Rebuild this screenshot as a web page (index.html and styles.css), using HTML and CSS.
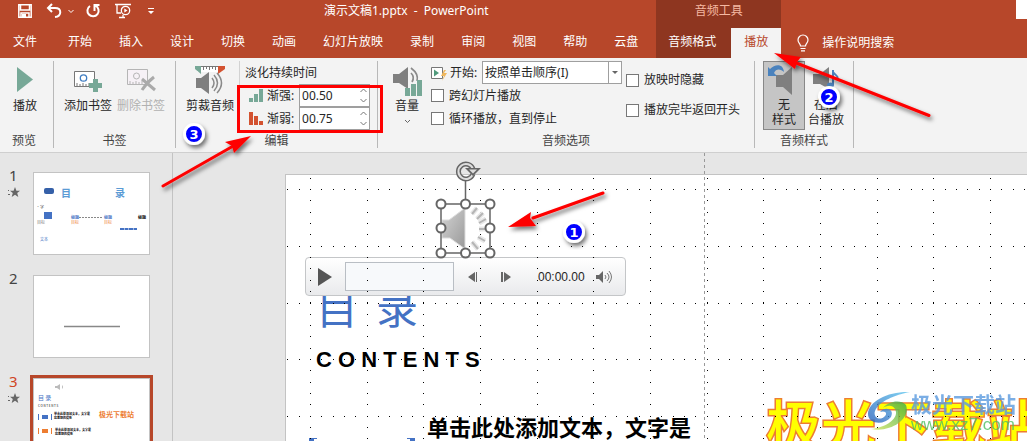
FILE: index.html
```html
<!DOCTYPE html>
<html lang="zh-CN">
<head>
<meta charset="utf-8">
<title>演示文稿1.pptx - PowerPoint</title>
<link rel="stylesheet" href="styles.css">
</head>
<body>
<header class="header">
  <div class="titlebar">
    <div class="quick">
      <button class="q" aria-label="保存"><svg width="16" height="16" fill="none" stroke="#fff" stroke-width="1.500"><path d="M1.800 1.800h12.400v12.400H1.800zM3.500 2v5h9V2"/><path d="M4 14v-4h8v4" /><path d="M5 11h4v3H5z" fill="#fff" stroke="none"/></svg></button>
      <button class="q undo" aria-label="撤消"><svg width="16" height="16" fill="none" stroke="#fff" stroke-width="2"><path d="M6 1 2 5l4 4M2 5h7c7 0 7 8 0 9"/></svg></button>
      <button class="q caret" aria-label="撤消列表"><svg width="6" height="5" fill="none" stroke="#fff"><path d="m.5 1 2.500 2.500L5.500 1"/></svg></button>
      <button class="q redo" aria-label="重复"><svg width="16" height="16" fill="none" stroke="#fff" stroke-width="2"><path d="M5 3a5.600 5.600 0 1 0 5.500-.3M9.500 8V2h5"/></svg></button>
      <button class="q show" aria-label="放映"><svg width="18" height="16" fill="none" stroke="#fff" stroke-width="1.300"><path d="M1 1.500h16M3 2v8h4M5 14.500h6M9 12v3"/><circle cx="11.500" cy="7.500" r="4.200"/><path d="m10.300 5.500 3.200 2-3.200 2z" fill="#fff" stroke="none"/></svg></button>
      <button class="q more" aria-label="自定义"><svg width="6" height="8" fill="#fff"><path d="M0 1h6v1H0zM0 4h6L3 7z"/></svg></button>
    </div>
    <h1 class="doc">演示文稿1.pptx&nbsp; -&nbsp; PowerPoint</h1>
  </div>
  <div class="context-title">音频工具</div>
  <div class="account"><button class="signin" aria-label="登录"></button></div>
  <nav class="tabs">
    <button class="tab file">文件</button><button class="tab">开始</button><button class="tab">插入</button><button class="tab">设计</button><button class="tab">切换</button><button class="tab">动画</button><button class="tab">幻灯片放映</button><button class="tab">录制</button><button class="tab">审阅</button><button class="tab">视图</button><button class="tab">帮助</button><button class="tab">云盘</button>
  </nav>
  <nav class="context-tabs"><button class="tab format">音频格式</button><button class="tab active">播放</button></nav>
  <button class="tell"><svg width="12" height="18" fill="none" stroke="#fff" stroke-width="1.200"><path d="M3.500 12c0-2.500-2.500-3-2.500-6a5 5 0 0 1 10 0c0 3-2.500 3.500-2.500 6zM3.500 14.500h5M4 16.800h4"/></svg>操作说明搜索</button>
</header>

<section class="ribbon">
  <div class="group preview">
    <div class="body"><button class="big"><svg width="32" height="32"><path d="M8 2v25l16-12.500z" fill="#77a897"/></svg>播放</button></div>
    <div class="caption">预览</div>
  </div>
  <div class="group marks">
    <div class="body">
      <button class="big"><svg width="32" height="32"><path d="M2.500 6.500h20v15h-20z" fill="#fff" stroke="#777"/><path d="M5 21v-3m3 3v-2m3 2v-3m3 3v-2m3 2v-3" stroke="#777"/><circle cx="11.500" cy="13" r="3.200" fill="none" stroke="#3f7cc0" stroke-width="1.300"/><path d="M21 14h5v4h4v5h-4v4h-5v-4h-4v-5h4z" fill="#77a897"/></svg>添加书签</button>
      <button class="big" disabled><svg width="32" height="32"><path d="M2.500 4.500h20v15h-20z" fill="#f6f1f6" stroke="#b5b5b5"/><path d="M5 19v-3m3 3v-2m3 2v-3m3 3v-2m3 2v-3" stroke="#b5b5b5"/><circle cx="11.500" cy="11" r="3" fill="none" stroke="#b5b5b5"/><path d="m17 14 13 11M29 12c-4 3-8 7-12 13" stroke="#aaa" stroke-width="3"/></svg>删除书签</button>
    </div>
    <div class="caption">书签</div>
  </div>
  <div class="group edit">
    <div class="body">
      <button class="big"><svg width="32" height="32"><path d="M3 1h25v6H3z" fill="#fff"/><path d="M2 1.500h28M9.500 1v4m3-4v3m3-3v4m3-4v3m3-3v4" stroke="#777"/><path d="M1 1h6v8L1 4z" fill="#77a897"/><path d="M31 1h-7v8l7-5z" fill="#d35230"/><path d="M2 13h5l8-6v22l-8-6H2z" fill="#7f7f7f"/><path d="M18 13q4 5 0 10M20 10q7 8 0 16M23 8q9 10 0 20" fill="none" stroke="#8a8a8a" stroke-width="1.500"/></svg>剪裁音频</button>
      <div class="fade">
        <div class="row">淡化持续时间</div>
        <div class="row"><svg width="15" height="13" fill="#77a897"><path d="M0 9h4v4H0zM5 5h4v8H5zM10 0h4v13h-4z"/></svg><label for="in">渐强:</label><span class="spin"><input id="in" value="00.50"><span class="steps"><button aria-label="增加渐强"><svg width="7" height="5" fill="none" stroke="#777"><path d="m.5 4 3-3 3 3"/></svg></button><button aria-label="减少渐强"><svg width="7" height="5" fill="none" stroke="#777"><path d="m.5 1 3 3 3-3"/></svg></button></span></span></div>
        <div class="row"><svg width="15" height="13" fill="#d35230"><path d="M0 0h4v13H0zM5 4h4v9H5zM10 9h4v4h-4z"/></svg><label for="out">渐弱:</label><span class="spin"><input id="out" value="00.75"><span class="steps"><button aria-label="增加渐弱"><svg width="7" height="5" fill="none" stroke="#777"><path d="m.5 4 3-3 3 3"/></svg></button><button aria-label="减少渐弱"><svg width="7" height="5" fill="none" stroke="#777"><path d="m.5 1 3 3 3-3"/></svg></button></span></span></div>
      </div>
    </div>
    <div class="caption">编辑</div>
  </div>
  <div class="group options">
    <div class="body">
      <button class="big"><svg width="32" height="32"><path d="M2 9h6l9-7v22l-9-6H2z" fill="#7f7f7f"/><path d="M20 8q4 4 1 9M20 3q8 6 6 13" fill="none" stroke="#8a8a8a" stroke-width="1.700"/><path d="M14 23h5v8h-5zM20 19h5v12h-5zM26 15h5v16h-5z" fill="#77a897"/></svg>音量<svg class="drop" width="7" height="5" fill="none" stroke="#666"><path d="m1 1 2.500 2.500L6 1"/></svg></button>
      <div class="play-col">
        <div class="row"><svg width="16" height="16"><path d="M.5 2.500v11h11v-11z" fill="#fff" stroke="#777"/><path d="M3 4.500v7L8 8z" fill="#509a7c"/><path d="m13 5-3 6h3l-2 5 5-8h-3l2-3z" fill="#efb75d"/></svg><label for="start">开始:</label><select id="start"><option>按照单击顺序(I)</option></select></div>
        <label class="row check"><input type="checkbox">跨幻灯片播放</label>
        <label class="row check"><input type="checkbox">循环播放，直到停止</label>
      </div>
      <div class="hide-col">
        <label class="check"><input type="checkbox">放映时隐藏</label>
        <label class="check"><input type="checkbox">播放完毕返回开头</label>
      </div>
    </div>
    <div class="caption">音频选项</div>
  </div>
  <div class="group styles">
    <div class="body">
      <button class="big two on"><svg width="32" height="32"><path d="M8 11h7l9-8v28l-9-8H8z" fill="#7f7f7f"/><path d="M-1 2v10h10L6 9c2-5 7-4 10-1C15-1 7 0 2 5z" fill="#4a82bd"/></svg><span>无<br>样式</span></button>
      <button class="big two"><svg width="32" height="32"><path d="M3 10h7l9-7v22l-9-5H3z" fill="#7f7f7f"/><path d="M23 6v15M23 8c3 4 6 4 4 8" fill="none" stroke="#4a82bd" stroke-width="2"/><ellipse cx="20.500" cy="21" rx="3.500" ry="2.500" fill="#4a82bd"/></svg><span>在后<br>台播放</span></button>
    </div>
    <div class="caption">音频样式</div>
  </div>
</section>

<main class="work">
  <aside class="slides">
    <div class="item"><div class="num">1<svg width="12" height="11" fill="#666"><path d="m7 0 1.400 3.700H12L9.200 6l1.100 4L7 7.800 3.700 10l1.100-4L2 3.700h3.600zM0 3h1v1H0zM0 7h2v1H0z"/></svg></div>
      <button class="thumb" aria-label="幻灯片 1"><svg viewBox="0 0 115 81"><rect x="10" y="15" width="10" height="6" rx="2" fill="#3560a8"/><g class="mini-head"><text x="27" y="24">目</text><text x="81" y="24">录</text></g><g class="mini"><text x="2" y="36" fill="#555">·字</text><rect x="10" y="39" width="8" height="7" fill="#4472c4"/><text x="3" y="51" fill="#777">目标</text><text x="37" y="46" class="b blue">标题</text><text x="70" y="46" class="b blue">标题</text><text x="104" y="46" class="b">标题</text><text x="37" y="51" fill="#ed7d31">目标</text><text x="70" y="51" fill="#ed7d31">目标</text><text x="6" y="68" fill="#4472c4">文本</text></g><path d="M45 44.500h24" stroke="#888" stroke-dasharray="2 1"/><path d="M86 56h17" stroke="#4472c4" stroke-width="2" stroke-dasharray="4 .5"/></svg></button></div>
    <div class="item"><div class="num">2</div><button class="thumb" aria-label="幻灯片 2"><svg viewBox="0 0 115 81"><path d="M30 50.500h56" stroke="#888" stroke-width="1.500"/></svg></button></div>
    <div class="item current"><div class="num">3<svg width="12" height="11" fill="#666"><path d="m7 0 1.400 3.700H12L9.200 6l1.100 4L7 7.800 3.700 10l1.100-4L2 3.700h3.600zM0 3h1v1H0zM0 7h2v1H0z"/></svg></div>
      <button class="thumb" aria-label="幻灯片 3"><svg viewBox="0 0 115 81"><path d="M21 7h2l3-2v6l-3-2h-2zM28 6q2 2 0 4" fill="#bbb"/><g class="mini"><text x="4" y="21" class="t">目&nbsp;录</text><text x="4" y="28" class="s">C O N T E N T S</text><text x="20" y="36" class="b s">单击此处添加文本，文字是</text><text x="20" y="40" class="b s">您思想的提炼</text><text x="21" y="52" class="b s">单击此处添加文本，文字是</text><text x="21" y="56" class="b s">您思想的提炼</text><text x="65" y="38" class="art">极光下载站</text></g><path d="M4.500 35v6M17.500 35v6" stroke="#4472c4" /><path d="M4.500 49v6M17.500 49v6" stroke="#ed7d31"/><path d="M8 38h6" stroke="#4472c4" stroke-width="4"/><path d="M8 52h6" stroke="#ed7d31" stroke-width="4"/></svg></button></div>
  </aside>
  <div class="stage">
    <div class="slide">
      <h2 class="toc"><span>目</span><span>录</span></h2>
      <p class="contents">C O N T E N T S</p>
      <p class="desc">单击此处添加文本，文字是</p>
      <svg class="bracket" width="106" height="6" fill="#4472c4"><path d="M0 0h8v1H5v5H0zM98 0h8v6h-5V1h-3z"/></svg>
      <p class="wordart">极光下载站</p>
      <div class="player">
        <button aria-label="播放"><svg width="14" height="18"><path d="M0 0v18l14-9z" fill="#555"/></svg></button>
        <div class="track"></div>
        <button class="back" aria-label="后退"><svg width="10" height="10" fill="#666"><path d="M7 0v10L0 5zM8 0h1v10H8z"/></svg></button>
        <button class="fwd" aria-label="前进"><svg width="10" height="10" fill="#666"><path d="M3 0v10l7-5zM0 0h2v10H0z"/></svg></button>
        <span class="time">00:00.00</span>
        <button aria-label="音量"><svg width="16" height="14"><path d="M0 5h3l4-4v12L3 9H0z" fill="#666"/><path d="M9 5q2 2 0 4M11 3q4 4 0 8M13 1q5 6 0 12" fill="none" stroke="#777"/></svg></button>
      </div>
      <svg class="dots" width="100%" height="100%" aria-hidden="true">
        <defs>
          <path id="h" d="M0 .5h1m10 0h1m11 0h1m10 0h1m10 0h1m11 0h1m10 0h1m10 0h1m11 0h1m10 0h1m10 0h1m11 0h1m10 0h1m10 0h1m11 0h1" stroke="#000"/>
          <path id="v" d="M.5 0v1m0 10v1m0 11v1m0 10v1m0 10v1m0 11v1m0 10v1m0 10v1m0 11v1m0 10v1m0 10v1m0 11v1m0 10v1m0 10v1m0 11v1" stroke="#000"/>
          <pattern id="grid" x="24" y="14" width="170" height="170" patternUnits="userSpaceOnUse"><use href="#h"/><use href="#h" y="57"/><use href="#h" y="114"/><use href="#v"/><use href="#v" x="57"/><use href="#v" x="113"/></pattern>
        </defs>
        <rect width="100%" height="100%" fill="url(#grid)"/>
      </svg>
      <svg class="audio" width="60" height="104" aria-label="音频对象">
        <defs><linearGradient id="metal" x1="0" y1="0" x2="1" y2="1"><stop offset="0" stop-color="#d4d4d4"/><stop offset="1" stop-color="#999"/></linearGradient></defs>
        <path d="M7 60h7l16-12v41L15 78H7z" fill="url(#metal)" stroke="#ddd"/>
        <path d="m37 54 5-6m0 11 6-6m-4 10 7-4m-7 10h8m-9 8 7 4m-13 1 6 7" stroke="#e8e8e8" stroke-width="5"/>
        <path d="m37 54 5-6m0 11 6-6m-4 10 7-4m-7 10h8m-9 8 7 4m-13 1 6 7" stroke="#b5b5b5" stroke-width="2"/>
        <g fill="none" stroke="#666" stroke-width="1.500"><path d="M6 44h49v49H6zM30.500 44V20"/><g fill="#fff" stroke-width="2"><circle cx="6" cy="44" r="4.500"/><circle cx="30.500" cy="44" r="4.500"/><circle cx="55" cy="44" r="4.500"/><circle cx="6" cy="68" r="4.500"/><circle cx="55" cy="68" r="4.500"/><circle cx="6" cy="93" r="4.500"/><circle cx="30.500" cy="93" r="4.500"/><circle cx="55" cy="93" r="4.500"/></g></g>
        <path d="M38 14a7.500 7.500 0 1 1 0-5" fill="none" stroke="#666" stroke-width="5"/><path d="M38 14a7.500 7.500 0 1 1 0-5" fill="none" stroke="#ddd" stroke-width="2"/><path d="M30 8h16l-8 8z" fill="#666"/><path d="M34 9.500h8l-4 4z" fill="#ddd"/>
      </svg>
    </div>
    <div class="guide"></div>
    <div class="watermark">
      <svg width="44" height="40"><defs><linearGradient id="sw" x1="0" y1="1" x2="1" y2="0"><stop offset="0" stop-color="#2a62bd"/><stop offset="1" stop-color="#62c8f0"/></linearGradient><linearGradient id="gr" x1="0" y1="1" x2="1" y2="0"><stop offset="0" stop-color="#d5e65a"/><stop offset="1" stop-color="#36a84d"/></linearGradient></defs><path d="M43 1C22 0 1 10 1 23c0 10 16 12 23 3 4-8-6-11-11-5 6-2 8 2 4 5-5 4-11 0-9-6C12 10 28 4 43 1z" fill="url(#sw)"/><path d="M39 14c5 13-14 28-35 24 15-1 29-11 24-20-3-5-9-3-12-1 5-7 18-9 23-3z" fill="url(#gr)"/></svg>
      <div><div class="wm-name">极光下载站</div><div class="wm-url">www.xz7.com</div></div>
    </div>
  </div>
</main>

<svg class="notes" width="960" height="250">
  <defs><filter id="sh" x="-30%" y="-30%" width="160%" height="160%"><feDropShadow dx="2" dy="3" stdDeviation="2" flood-opacity=".55"/></filter></defs>
  <path d="M238.500 86.500h143v45h-143z" fill="none" stroke="#fe0000" stroke-width="3"/>
  <g filter="url(#sh)" fill="#fe0000" stroke="#fe0000" stroke-linecap="round" stroke-width="3">
    <path d="m603 193-70 25M929 115.500 790 60.500M163 186l72-41"/>
    <path stroke="none" d="m508 227 23-15-1 6 6 8zM774 53l27 4-4 5-2 7zM251 136l-17 17-2-7-7-4z"/>
  </g>
  <g filter="url(#sh)" fill="#00f" stroke="#fff" stroke-width="3"><circle cx="574" cy="232" r="9.500"/><circle cx="829" cy="97" r="9.500"/><circle cx="194" cy="134" r="9.500"/></g>
  <g class="note-num"><text x="574" y="237">1</text><text x="829" y="102">2</text><text x="194" y="139">3</text></g>
</svg>
</body>
</html>
```
FILE: styles.css
```css
* { box-sizing: border-box; }
body { margin: 0; height: 100vh; overflow: hidden; position: relative; display: flex; flex-direction: column; font: 12px/16px "Noto Sans", "Noto Sans CJK SC", sans-serif; color: #262626; background: #e6e6e6; }
button { border: 0; padding: 0; margin: 0; background: none; font: inherit; color: inherit; }
svg { display: block; flex: none; }
h1, h2, p { margin: 0; }

.header { display: grid; grid-template-columns: auto auto 1fr; grid-template-rows: 28px 30px; flex: none; background: #b7472a; color: #fff; }
.titlebar { display: flex; align-items: center; padding-left: 17px; padding-bottom: 6px; }
.quick { display: flex; align-items: center; }
.undo { margin-left: 13px; }
.caret { margin-left: 6px; }
.redo { margin-left: 11px; }
.show { margin-left: 13px; }
.more { margin-left: 16px; }
.doc { margin-left: 170px; font-size: 12px; font-weight: 400; white-space: nowrap; }
.context-title { padding-top: 3px; text-align: center; background: #8e3620; color: #f5b8a2; }
.account { display: flex; justify-content: flex-end; }
.signin { width: 11px; height: 19px; background: #fff; }
.tabs, .context-tabs { display: flex; }
.tabs { gap: 1px; padding-right: 5px; }
.tab { padding: 0 13px; padding-bottom: 2px; white-space: nowrap; }
.file { padding-right: 17px; }
.context-tabs { background: #8e3620; }
.format { padding: 0 15px 2px 12px; }
.active { background: #f3f3f3; color: #b7472a; }
.tell { display: flex; align-items: center; gap: 13px; padding-left: 16px; }

.ribbon { display: flex; flex: none; padding: 3px 0 4px; background: #f3f3f3; border-bottom: 1px solid #cfcfcf; }
.group { display: flex; flex-direction: column; border-right: 1px solid #b8b8b8; white-space: nowrap; }
.body { display: flex; height: 71px; }
.caption { padding-top: 1px; line-height: 15px; text-align: center; color: #444; }
.big { display: flex; flex-direction: column; align-items: center; height: 69px; padding-top: 4px; line-height: 18px; white-space: nowrap; }
.big:disabled { color: #b1b1b1; }
.drop { margin-top: 4px; }
.preview .body { padding: 0 12px 0 9px; }
.preview .caption { padding-right: 5px; }
.marks .body { padding: 0 10px; gap: 5px; }
.edit .body { padding: 0 7px 0 10px; gap: 5px; }
.fade { padding-left: 5px; border-left: 1px solid #d2d2d2; height: 69px; }
.row { display: flex; align-items: center; height: 23px; }
.fade .row svg { margin-left: 4px; }
.fade label { width: 35px; padding-left: 3px; }
.spin { display: flex; width: 71px; height: 23px; background: #fff; border: 1px solid #9f9f9f; }
.spin input { flex: 1; min-width: 0; padding: 0 0 0 2px; border: 0; background: none; font: inherit; color: #262626; }
.steps { display: flex; flex-direction: column; justify-content: space-around; width: 13px; }
.options .body { padding: 0 14px 0 13px; }
.options .big { padding-right: 8px; }
.play-col { width: 191px; }
.play-col .row label[for] { width: 35px; padding-left: 3px; }
.play-col select { appearance: none; flex: 1; height: 23px; padding: 0 3px 0 2px; border: 1px solid #9f9f9f; border-radius: 0; font: inherit; color: #262626; background: linear-gradient(#9f9f9f, #9f9f9f) right 12px top / 1px 100% no-repeat, #fff; }
.play-col .row { position: relative; }
.play-col .row:first-child::after { content: ""; position: absolute; right: 4px; top: 10px; border: 3px solid transparent; border-top-color: #666; border-bottom: 0; }
.check { display: flex; align-items: center; gap: 5px; }
.check input { appearance: none; width: 13px; height: 13px; margin: 0; background: #fff; border: 1px solid #777; }
.hide-col { padding: 4px 0 0 4px; }
.hide-col .check { height: 30px; }
.styles .body { padding: 0 6px 0 8px; }
.two { width: 42px; line-height: 15px; gap: 1px; padding-top: 3px; }
.on { background: #c5c5c5; border: 1px solid #888; padding-top: 2px; }

.work { display: flex; flex: 1; min-height: 0; overflow: hidden; }
.slides { flex: none; width: 173px; padding: 19px 0 0 8px; border-right: 1px solid #c3c3c3; overflow: hidden; }
.item { display: flex; margin-bottom: 20px; }
.num { width: 25px; flex: none; font-size: 15px; line-height: 17px; padding-left: 1px; color: #444; margin-top: -5px; }
.num svg { margin-top: 3px; margin-left: -1px; }
.thumb { width: 117px; height: 83px; flex: none; background: #fff; border: 1px solid #c3c3c3; }
.thumb svg { width: 100%; height: 100%; }
.current .num { color: #d04525; }
.current .thumb { outline: 3px solid #b7472a; }
.mini-head { font: 700 10px "Noto Sans CJK SC", sans-serif; fill: #5b9bd5; }
.mini { font: 4px "Noto Sans CJK SC", sans-serif; }
.mini .b { font-weight: 700; }
.mini .s { font-size: 3px; }
.mini .blue { fill: #4472c4; }
.mini .t { font-size: 6px; fill: #4472c4; }
.mini .art { font-size: 7px; font-weight: 700; fill: #ed7d31; }

.stage { position: relative; flex: 1; display: flex; padding: 21px 0 0 112px; overflow: hidden; }
.slide { position: relative; flex: 1; background: #fff; border: 1px solid #c3c3c3; border-width: 1px 0 0 1px; }
.guide { position: absolute; left: 531px; top: 0; bottom: 0; width: 1px; background: repeating-linear-gradient(#999 0 3px, transparent 3px 6px); }
.toc, .contents, .desc, .bracket, .wordart, .player, .dots, .audio { position: absolute; }
.toc { left: 30px; top: 101px; display: flex; gap: 18px; font: 400 42px/60px "Noto Sans CJK SC", sans-serif; color: #4472c4; }
.contents { left: 30px; top: 172px; font: 700 22px/26px "Liberation Sans", sans-serif; color: #000; white-space: nowrap; }
.desc { left: 141px; top: 236px; font: 700 22px/30px "Noto Sans CJK SC", sans-serif; color: #000; white-space: nowrap; }
.bracket { left: 23px; top: 263px; }
.wordart { left: 480px; top: 207px; font: 500 55px/80px "Noto Sans CJK SC", sans-serif; color: #ff0; -webkit-text-stroke: 3px #ed7d31; paint-order: stroke fill; white-space: nowrap; }
.dots { left: 0; top: 0; }
.player { left: 19px; top: 82px; width: 321px; height: 39px; display: flex; align-items: center; padding: 0 13px 0 12px; border: 1px solid #c4c6c8; border-radius: 4px; background: linear-gradient(#fff, #e9eaec); }
.track { width: 109px; height: 29px; margin-left: 13px; background: #f7f9fb; border: 1px solid #b9bec4; }
.back { margin-left: 14px; }
.fwd { margin-left: 23px; }
.time { flex: 1; padding-left: 27px; font: 12px/16px "Liberation Sans", sans-serif; }
.audio { left: 149px; top: -15px; overflow: visible; }
.watermark { position: absolute; left: 694px; top: 238px; display: flex; opacity: .8; }
.wm-name { font: 700 21px/24px "Noto Sans CJK SC", sans-serif; color: #5b9bdf; }
.wm-url { font: 17px/20px "Liberation Sans", sans-serif; color: #4fbf60; }
.notes { position: absolute; left: 0; top: 0; pointer-events: none; }
.note-num { font: 700 13px "DejaVu Sans", sans-serif; fill: #fff; text-anchor: middle; }
```
